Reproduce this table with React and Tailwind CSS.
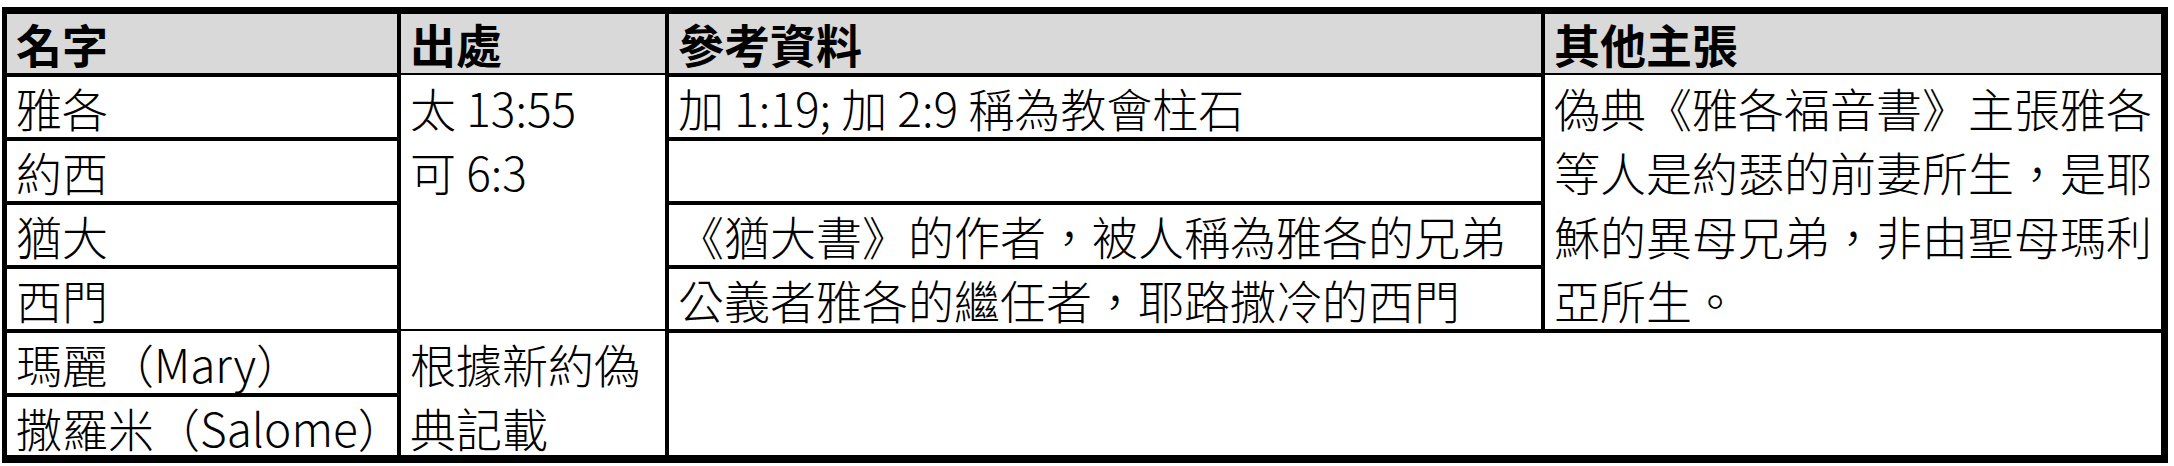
const names = ["雅各", "約西", "猶大", "西門"];

const refs = [
  "加 1:19; 加 2:9 稱為教會柱石",
  "",
  "《猶大書》的作者，被人稱為雅各的兄弟",
  "公義者雅各的繼任者，耶路撒冷的西門",
];

const claimLines = [
  "偽典《雅各福音書》主張雅各",
  "等人是約瑟的前妻所生，是耶",
  "穌的異母兄弟，非由聖母瑪利",
  "亞所生。",
];

const rowStarts = ["row-start-3", "row-start-4", "row-start-5"];

const Cell = ({ className = "", children }) => (
  <div className={`bg-white px-[9px] leading-[60px] whitespace-nowrap ${className}`}>
    {children}
  </div>
);

const Head = ({ children }) => (
  <div className="bg-[#d9d9d9] px-[9px] leading-[59px] font-bold whitespace-nowrap">
    {children}
  </div>
);

export default function App() {
  return (
    <div lang="zh-Hant-TW" className="bg-white w-[2174px] h-[466px] pt-[7px] pl-[2px]">
      {/* ===============================
          TABLE (black bg shows through gaps as rules)
      ================================ */}
      <div
        className="grid w-[2166px] bg-black gap-[4px] pt-[7px] pl-[5px] pr-[7px] pb-[8px]
          grid-cols-[390px_264px_872px_616px] grid-rows-[59px_60px_60px_60px_60px_60px_58px]
          text-[46px] font-light text-black font-['Noto_Sans_CJK_TC','Noto_Sans',sans-serif]"
      >
        <Head>名字</Head>
        <Head>出處</Head>
        <Head>參考資料</Head>
        <Head>其他主張</Head>

        {/* first name row + the cells that span four rows */}
        <Cell className="col-start-1 row-start-2">{names[0]}</Cell>
        <div className="bg-white col-start-2 row-start-2 row-span-4 px-[9px] leading-[64px] -mt-[2px]">
          <div>太 13:55</div>
          <div>可 6:3</div>
        </div>
        <Cell className="col-start-3 row-start-2">{refs[0]}</Cell>
        <div className="bg-white col-start-4 row-start-2 row-span-4 px-[9px] leading-[64px] whitespace-nowrap -mt-[2px]">
          {claimLines.map((line) => (
            <div key={line}>{line}</div>
          ))}
        </div>

        {names.slice(1).map((n, i) => (
          <div key={n} className="contents">
            <Cell className={`col-start-1 ${rowStarts[i]}`}>{n}</Cell>
            <Cell className={`col-start-3 ${rowStarts[i]}`}>{refs[i + 1]}</Cell>
          </div>
        ))}

        {/* Mary / Salome */}
        <Cell className="col-start-1 row-start-6">瑪麗（Mary）</Cell>
        <Cell className="col-start-1 row-start-7 leading-[58px]">撒羅米（Salome）</Cell>
        <div className="bg-white col-start-2 row-start-6 row-span-2 px-[9px] leading-[64px] -mt-[2px]">
          根據新約偽典記載
        </div>
        <div className="bg-white col-start-3 col-span-2 row-start-6 row-span-2" />
      </div>
    </div>
  );
}
